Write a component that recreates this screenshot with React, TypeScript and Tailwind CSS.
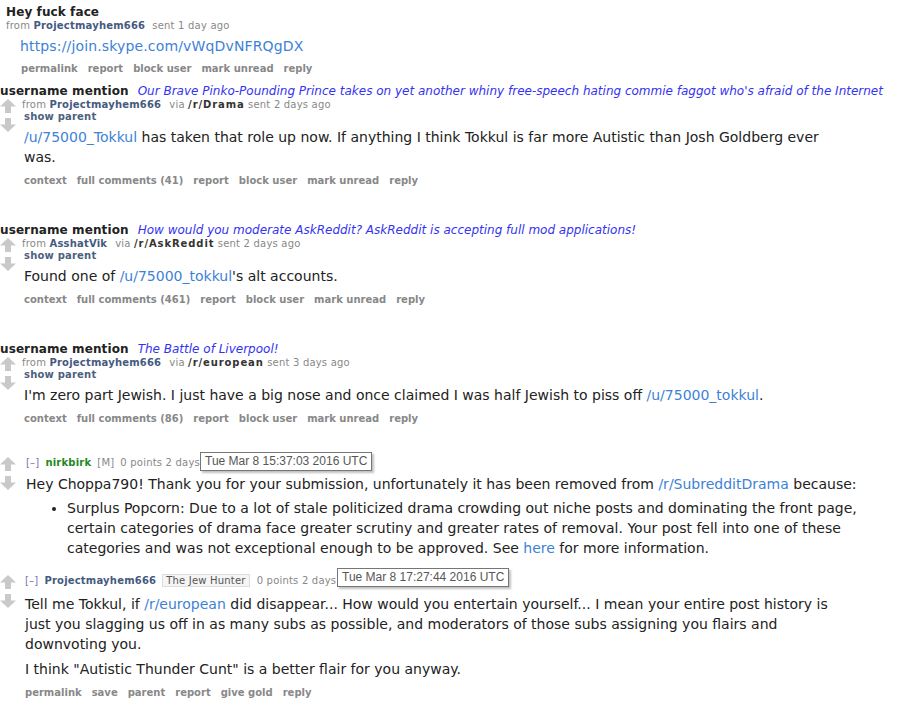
import React from "react";

const base = "font-['DejaVu_Sans','Verdana',sans-serif]";
const link = "text-[#3d82d6]";

function Arrows() {
  return (
    <div className="flex w-[20px] shrink-0 flex-col items-start gap-[5px]">
      <svg width="16" height="14" viewBox="0 0 16 14">
        <path d="M8 0 L16 7.5 L11 7.5 L11 14 L5 14 L5 7.5 L0 7.5 Z" fill="#c9c9c9" />
      </svg>
      <svg width="16" height="14" viewBox="0 0 16 14">
        <path d="M8 14 L16 6.5 L11 6.5 L11 0 L5 0 L5 6.5 L0 6.5 Z" fill="#c9c9c9" />
      </svg>
    </div>
  );
}

function Buttons({ items, className = "" }: { items: string[]; className?: string }) {
  return (
    <ul className={`flex gap-[10px] text-[10px] font-bold leading-[13px] text-[#888] ${className}`}>
      {items.map((b) => (
        <li key={b}>{b}</li>
      ))}
    </ul>
  );
}

function Tooltip({ text, className }: { text: string; className: string }) {
  return (
    <div
      className={`absolute h-[19px] border border-[#767676] bg-white px-[4px] text-[12px] leading-[17px] text-[#575757] shadow-[2px_2px_2px_rgba(0,0,0,0.25)] font-['Liberation_Sans','Arial',sans-serif] ${className}`}
    >
      {text}
    </div>
  );
}

function Title({ children }: { children: React.ReactNode }) {
  return (
    <div className="flex items-baseline gap-[9px]">
      <span className="text-[12px] font-bold leading-[16px] tracking-[0.1px] text-[#222]">username mention</span>
      <span className="text-[12px] italic leading-[16px] text-[#3333f0]">{children}</span>
    </div>
  );
}

function Mention({
  title,
  from,
  sub,
  when,
  children,
  comments,
  className = "",
}: {
  title: string;
  from: string;
  sub: string;
  when: string;
  children: React.ReactNode;
  comments: string;
  className?: string;
}) {
  return (
    <div className={className}>
      <Title>{title}</Title>
      <div className="flex">
        <Arrows />
        <div className="pl-[2px]">
          <div className="text-[10px] leading-[12px] tracking-[0.2px] text-[#888]">
            from <span className="font-bold text-[#465a80]">{from}</span>
            <span className="ml-[8px]">via </span>
            <span className="font-bold tracking-[0.9px] text-[#333]">{sub}</span> sent {when}
          </div>
          <div className="ml-[2px] text-[10px] font-bold leading-[12px] tracking-[0.2px] text-[#4d5f80]">show parent</div>
          <div className="ml-[2px] mt-[4px] w-[860px] text-[14px] leading-[20px] text-[#222]">{children}</div>
          <Buttons
            className="ml-[2px] mt-[7px]"
            items={["context", `full comments (${comments})`, "report", "block user", "mark unread", "reply"]}
          />
        </div>
      </div>
    </div>
  );
}

export default function App() {
  return (
    <div className={`relative min-h-[718px] w-[901px] overflow-hidden bg-white ${base}`}>
      {/* private message */}
      <div className="pl-[6px] pt-[4px]">
        <div className="text-[12px] font-bold leading-[16px] tracking-[0.1px] text-[#222]">Hey fuck face</div>
        <div className="text-[10px] leading-[12px] tracking-[0.2px] text-[#888]">
          from <span className="font-bold text-[#465a80]">Projectmayhem666</span>
          <span className="ml-[7px]">sent 1 day ago</span>
        </div>
        <div className={`ml-[14px] mt-[4px] text-[14px] leading-[20px] tracking-[0.15px] ${link}`}>
          https://join.skype.com/vWqDvNFRQgDX
        </div>
        <Buttons className="ml-[15px] mt-[6px]" items={["permalink", "report", "block user", "mark unread", "reply"]} />
      </div>

      <Mention
        className="mt-[8px]"
        title="Our Brave Pinko-Pounding Prince takes on yet another whiny free-speech hating commie faggot who's afraid of the Internet"
        from="Projectmayhem666"
        sub="/r/Drama"
        when="2 days ago"
        comments="41"
      >
        <span className={link}>/u/75000_Tokkul</span> has taken that role up now. If anything I think Tokkul is far more
        Autistic than Josh Goldberg ever
        <br />
        was.
      </Mention>

      <Mention
        className="mt-[35px]"
        title="How would you moderate AskReddit? AskReddit is accepting full mod applications!"
        from="AsshatVik"
        sub="/r/AskReddit"
        when="2 days ago"
        comments="461"
      >
        Found one of <span className={link}>/u/75000_tokkul</span>'s alt accounts.
      </Mention>

      <Mention
        className="mt-[35px]"
        title="The Battle of Liverpool!"
        from="Projectmayhem666"
        sub="/r/european"
        when="3 days ago"
        comments="86"
      >
        I'm zero part Jewish. I just have a big nose and once claimed I was half Jewish to piss off{" "}
        <span className={link}>/u/75000_tokkul</span>.
      </Mention>

      {/* comment by moderator */}
      <div className="mt-[32px] flex">
        <Arrows />
        <div className="pl-[6px]">
          <div className="text-[10px] leading-[12px] tracking-[0.2px] text-[#888]">
            <span className="text-[#7676a8]">[–]</span>
            <span className="ml-[6px] font-bold text-[#228822]">nirkbirk</span>
            <span className="ml-[6px]">[M]</span>
            <span className="ml-[6px]">0 points 2 days ago</span>
          </div>
          <div className="mt-[5px] w-[860px] text-[14px] leading-[20px] text-[#222]">
            <p>
              Hey Choppa790! Thank you for your submission, unfortunately it has been removed from{" "}
              <span className={link}>/r/SubredditDrama</span> because:
            </p>
            <ul className="mt-[4px] list-disc pl-[41px]">
              <li>
                Surplus Popcorn: Due to a lot of stale politicized drama crowding out niche posts and dominating the front
                page,
                <br />
                certain categories of drama face greater scrutiny and greater rates of removal. Your post fell into one of
                these
                <br />
                categories and was not exceptional enough to be approved. See <span className={link}>here</span> for more
                information.
              </li>
            </ul>
          </div>
        </div>
      </div>
      <Tooltip text="Tue Mar 8 15:37:03 2016 UTC" className="left-[200px] top-[452px]" />

      {/* reply comment */}
      <div className="mt-[17px] flex">
        <Arrows />
        <div className="pl-[5px]">
          <div className="text-[10px] leading-[12px] tracking-[0.2px] text-[#888]">
            <span className="text-[#7676a8]">[–]</span>
            <span className="ml-[6px] font-bold text-[#465a80]">Projectmayhem666</span>
            <span className="ml-[6px] border border-[#ddd] bg-[#f5f5f5] px-[3px] text-[#545454]">The Jew Hunter</span>
            <span className="ml-[7px]">0 points 2 days ago</span>
          </div>
          <div className="mt-[7px] w-[860px] text-[14px] leading-[20px] text-[#222]">
            <p>
              Tell me Tokkul, if <span className={link}>/r/european</span> did disappear... How would you entertain
              yourself... I mean your entire post history is
              <br />
              just you slagging us off in as many subs as possible, and moderators of those subs assigning you flairs and
              <br />
              downvoting you.
            </p>
            <p className="mt-[5px]">I think "Autistic Thunder Cunt" is a better flair for you anyway.</p>
          </div>
          <Buttons className="mt-[7px]" items={["permalink", "save", "parent", "report", "give gold", "reply"]} />
        </div>
      </div>
      <Tooltip text="Tue Mar 8 17:27:44 2016 UTC" className="left-[337px] top-[568px]" />
    </div>
  );
}
